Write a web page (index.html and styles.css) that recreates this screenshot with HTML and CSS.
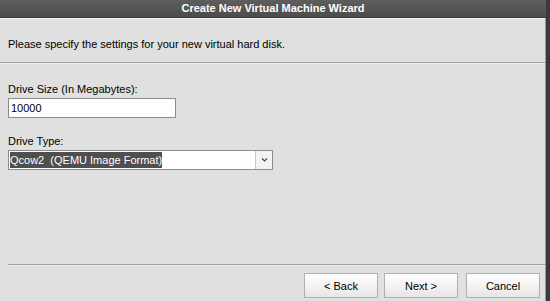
FILE: index.html
```html
<!DOCTYPE html>
<html lang="en">
<head>
    <meta charset="UTF-8">
    <title>Create New Virtual Machine Wizard</title>
    <link rel="stylesheet" href="styles.css">
</head>
<body>
    <div class="window">
        <div class="title-bar">Create New Virtual Machine Wizard</div>
        <div class="frame">
            <div class="header">
                <p>Please specify the settings for your new virtual hard disk.</p>
            </div>
            <div class="content">
                <div class="field">
                    <label>Drive Size (In Megabytes):</label>
                    <div class="textbox">10000</div>
                </div>
                <div class="field">
                    <label>Drive Type:</label>
                    <div class="combo">
                        <span class="combo-value"><span class="selected">Qcow2&nbsp;&nbsp;(QEMU Image Format)</span></span>
                        <span class="combo-arrow">
                            <svg width="7" height="4" viewBox="0 0 7 4"><path d="M1 0.5 L3.5 3 L6 0.5" fill="none" stroke="#444" stroke-width="1.2"/></svg>
                        </span>
                    </div>
                </div>
            </div>
            <div class="footer">
                <div class="buttons">
                    <button class="button">&lt; Back</button>
                    <button class="button">Next &gt;</button>
                    <button class="button button-cancel">Cancel</button>
                </div>
            </div>
        </div>
    </div>
</body>
</html>
```

FILE: styles.css
```css
html, body {
    margin: 0;
    padding: 0;
}
body {
    font-family: "Liberation Sans", Arial, sans-serif;
    font-size: 11px;
    color: #000;
    background: #dfe0df;
}
.window {
    width: 550px;
    height: 301px;
    display: flex;
    flex-direction: column;
    box-sizing: border-box;
    border-right: 4px solid #3a3a3a;
}
.title-bar {
    height: 17px;
    line-height: 16px;
    text-align: center;
    color: #fff;
    font-weight: bold;
    font-size: 11px;
    background: linear-gradient(#5e5e5e, #4c4c4c);
    border-bottom: 1px solid #3b3b3b;
}
.frame {
    flex: 1;
    display: flex;
    flex-direction: column;
    background: #dfe0df;
    border-right: 1px solid #9a9a9a;
}
.header {
    height: 43px;
    border-top: 1px solid #f4f4f4;
    border-bottom: 1px solid #a0a0a0;
    box-shadow: 0 1px 0 #f0f0f0;
    display: flex;
    align-items: flex-end;
}
.header p {
    margin: 0 0 12px 8px;
}
.content {
    flex: 1;
    padding: 19px 8px 0 8px;
}
.field {
    margin-bottom: 16px;
}
.field label {
    display: block;
    margin-bottom: 2px;
    line-height: 14px;
}
.textbox {
    width: 164px;
    height: 18px;
    line-height: 18px;
    padding-left: 2px;
    background: #fff;
    border: 1px solid #8c8c8c;
}
.combo {
    width: 263px;
    height: 18px;
    display: flex;
    background: #fff;
    border: 1px solid #8c8c8c;
}
.combo-value {
    flex: 1;
    padding: 1px;
}
.selected {
    display: inline-block;
    height: 16px;
    line-height: 16px;
    background: #4f4f4f;
    color: #fff;
}
.combo-arrow {
    width: 16px;
    border-left: 1px solid #c8c8c8;
    background: #f4f4f4;
    display: flex;
    align-items: center;
    justify-content: center;
}
.footer {
    height: 36px;
    margin-left: 8px;
    border-top: 1px solid #a0a0a0;
    box-shadow: inset 0 1px 0 #f0f0f0;
}
.buttons {
    display: flex;
    justify-content: flex-end;
    gap: 6px;
    padding: 8px 5px 0 0;
}
.button {
    width: 74px;
    height: 25px;
    font-family: inherit;
    font-size: 11px;
    color: #000;
    background: linear-gradient(#ffffff, #f2f2f2 55%, #e6e6e6);
    border: 1px solid #b0b0b0;
    border-radius: 0;
    padding: 0;
}
.button-cancel {
    margin-left: 2px;
}
```
